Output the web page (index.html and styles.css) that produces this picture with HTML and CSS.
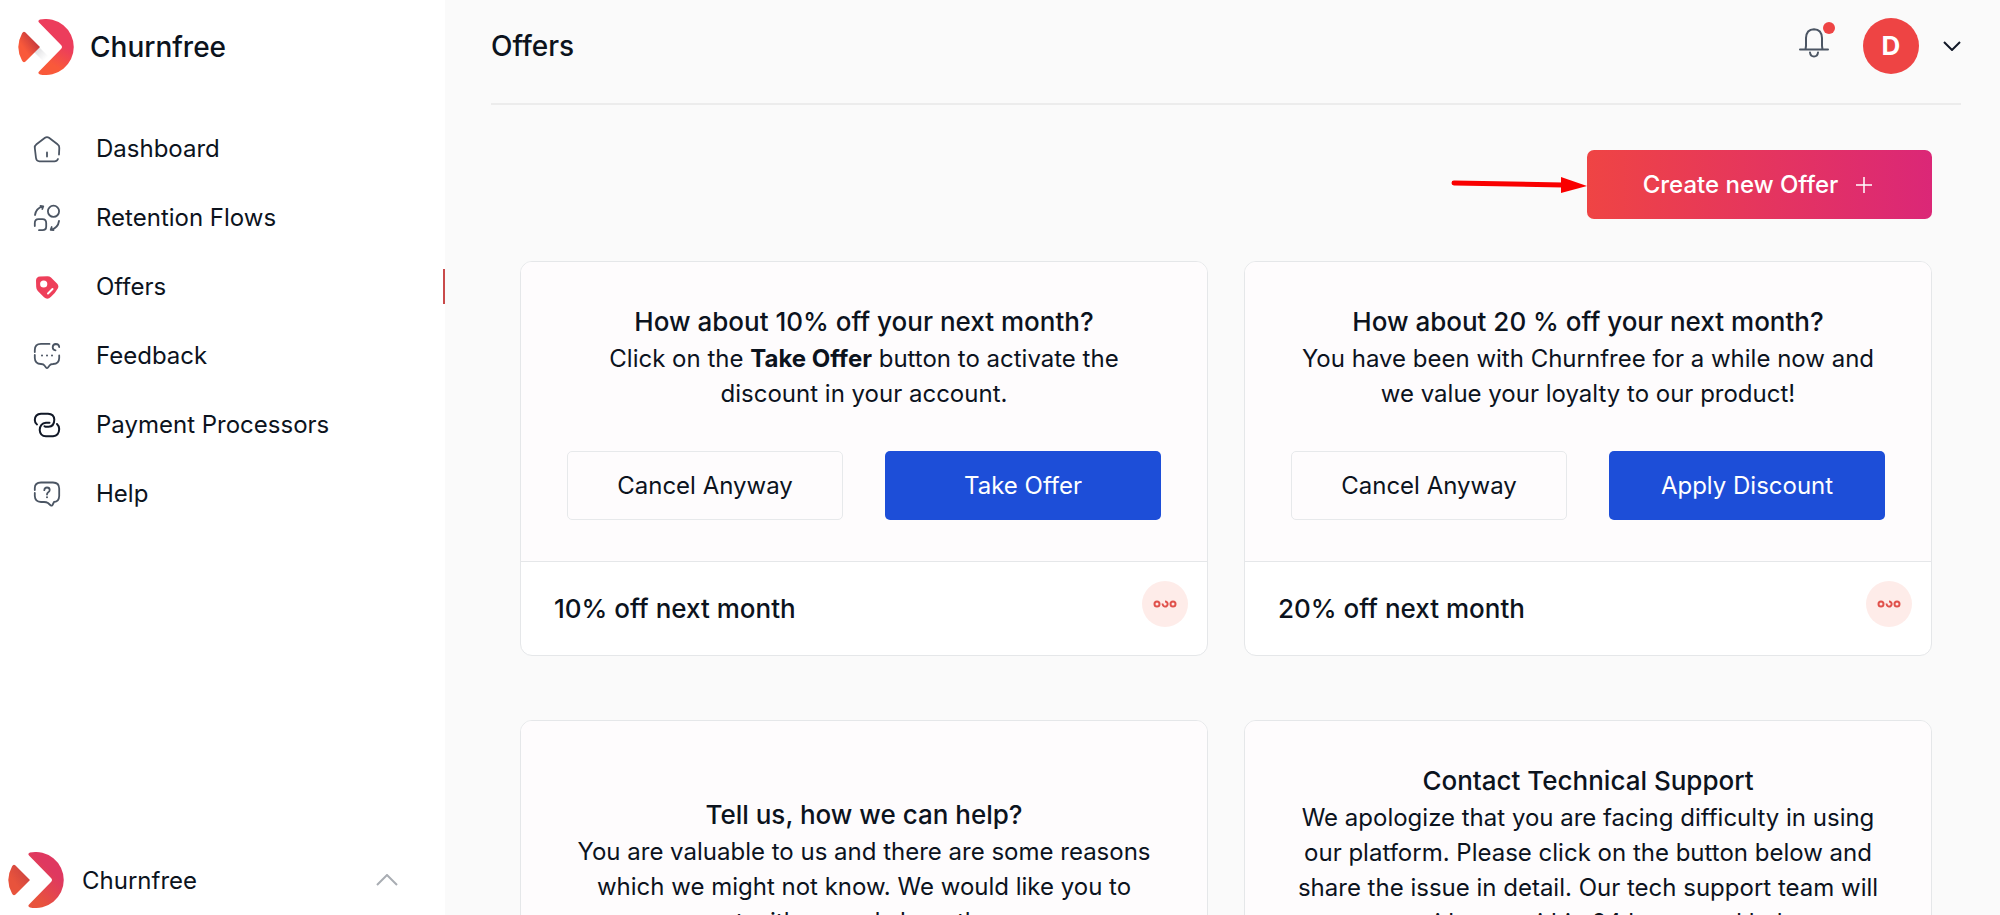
FILE: index.html
```html
<!DOCTYPE html>
<html lang="en">
<head>
<meta charset="utf-8">
<meta name="viewport" content="width=device-width, initial-scale=1">
<title>Offers - Churnfree</title>
<link rel="stylesheet" href="styles.css">
</head>
<body>
<div class="app">
  <aside class="sidebar">
    <a class="brand" href="#">
      <svg class="logo" viewBox="0 0 56 56" aria-hidden="true">
        <defs>
          <linearGradient id="lg1" x1="0.7" y1="0.2" x2="0.4" y2="1"><stop offset="0.3" stop-color="#ec3d5c"/><stop offset="0.8" stop-color="#f9593a"/></linearGradient>
          <linearGradient id="lg2" x1="0.8" y1="0.3" x2="0.4" y2="0.7"><stop offset="0" stop-color="#c73a3e"/><stop offset="1" stop-color="#f9593a"/></linearGradient>
          <linearGradient id="lg3" x1="0" y1="0.2" x2="0.6" y2="0.8"><stop offset="0" stop-color="#cfcfd3"/><stop offset="1" stop-color="#ffffff"/></linearGradient>
        </defs>
        <path d="M21 28 33 40 28 45 16 33Z" fill="url(#lg3)" opacity="0.7"/>
        <path d="M22 .6A28 28 0 1 1 22 55.4Q19 54 21.500 52L43 30Q45 28 43 26L21.500 4Q19 2 22 .6Z" fill="url(#lg1)"/>
        <path d="M7.500 13.500 22 28 7.500 42.500Q5.500 44.500 4 41.500A28 28 0 0 1 4 14.500Q5.500 11.500 7.500 13.500Z" fill="url(#lg2)"/>
      </svg>
      <span>Churnfree</span>
    </a>
    <nav class="nav">
      <a class="nav-item" href="#">
        <svg class="icon" viewBox="0 0 26 26"><path d="M25 18.500 25.300 12Q25.500 9.500 23.500 8.200L15 1.800Q13 .3 11 1.800L2.500 8.200Q.5 9.700 .8 12L2 22Q2.400 25.300 5.500 25.300H20.500Q23 25.300 24 23M13 16.500V20.500"/></svg>
        <span>Dashboard</span>
      </a>
      <a class="nav-item" href="#">
        <svg class="icon" viewBox="0 0 26 26"><circle cx="19.500" cy="6.300" r="5.600"/><path d="M1 10Q2 3 9 1.300M6.500.9 9.300 1.300 8.300 4M25 16Q24 23 17 24.800M19.500 25.200 16.700 24.800 17.700 22M.8 21V18Q.8 14.200 4.500 14.200H8.500Q12.200 14.200 12.200 18V21.500Q12.200 25.200 8.500 25.200H5"/></svg>
        <span>Retention Flows</span>
      </a>
      <a class="nav-item active" href="#" aria-current="page">
        <svg class="icon" viewBox="0 0 26 26"><path class="tag" d="M6 2.500 13.500 2.300Q15.500 2.300 17 3.600L23 9.500Q25.300 12 23.800 14.500 21 19.500 17 22.800 13.500 26.300 10 23.300L3.800 17Q2.300 15.500 2.200 13L2 6.500Q2.200 2.800 6 2.500Z"/><circle class="hole" cx="9.700" cy="10" r="3.600"/><path class="slit" d="M14 19.500 18.500 15"/></svg>
        <span>Offers</span>
      </a>
      <a class="nav-item" href="#">
        <svg class="icon" viewBox="0 0 26 26"><path d="M.8 9V7Q.8 1 7 .9H15.500M.8 12V15Q1 21 7 21 9.500 21 10.500 22.500L12 24.500Q13 25.800 14 24.500L15.500 22.500Q16.500 21 19 21 25.200 20.800 25.200 15V12.500M25.200 4Q25 1 21.800 1 18.700 1.200 18.700 4.300 18.700 7 21.500 7.300"/><path class="dots" d="M8 12.500h.01M13 12.500h.01M18 12.500h.01"/></svg>
        <span>Feedback</span>
      </a>
      <a class="nav-item" href="#">
        <svg class="icon link" viewBox="0 0 26 26"><path d="M3 12.500Q.8 11 .8 8 1 2 7 1.700H14Q20 2 20.300 7.500 20.300 14.500 14.500 14.800 11.500 15 10.500 14.200M23 12Q25.200 14 25.200 17 25 23.800 19 24.300H12Q6 24 5.700 18 6 11.500 12 10.800H15.500"/></svg>
        <span>Payment Processors</span>
      </a>
      <a class="nav-item" href="#">
        <svg class="icon" viewBox="0 0 26 26"><path d="M.8 9V7Q.8 1.600 7 1.500H19Q25.200 1.700 25.200 7.500V15Q25 20.800 20 21L18.500 24Q18 25.300 16.500 24.200L14 22Q12.500 21 10 21H7Q1 20.800 .8 15V12M10.300 9.200Q10.500 6.500 13 6.500 15.700 6.500 15.700 9 15.700 10.500 14 11.500 13 12.200 13 13.500"/><path class="dots" d="M13 16.300h.01"/></svg>
        <span>Help</span>
      </a>
    </nav>
    <button class="workspace" type="button">
      <svg class="logo" viewBox="0 0 56 56" aria-hidden="true">
        <defs>
          <linearGradient id="lg4" x1="0.8" y1="0.2" x2="0.3" y2="1"><stop offset="0.2" stop-color="#df3860"/><stop offset="0.9" stop-color="#e8533c"/></linearGradient>
          <linearGradient id="lg5" x1="0.8" y1="0.3" x2="0.4" y2="0.7"><stop offset="0" stop-color="#d14640"/><stop offset="1" stop-color="#e8533c"/></linearGradient>
        </defs>
        <path d="M22 .6A28 28 0 1 1 22 55.4Q19 54 21.500 52L43 30Q45 28 43 26L21.500 4Q19 2 22 .6Z" fill="url(#lg4)"/>
        <path d="M7.500 13.500 22 28 7.500 42.500Q5.500 44.500 4 41.500A28 28 0 0 1 4 14.500Q5.500 11.500 7.500 13.500Z" fill="url(#lg5)"/>
      </svg>
      <span>Churnfree</span>
      <svg class="chevron-up" viewBox="0 0 22 12"><path d="M1 11 11 1 21 11"/></svg>
    </button>
  </aside>

  <main class="main">
    <header class="topbar">
      <h1 class="page-title">Offers</h1>
      <button class="bell" type="button" aria-label="Notifications">
        <svg viewBox="0 0 30 30"><path d="M1 21.500H29M6.500 21.500 7 18V10Q7.300 1.500 15 1.200 22.700 1.500 23 10V18L23.500 21.500M11 24.500Q11.500 28.500 15 28.500T19 24.500"/></svg>
        <span class="badge"></span>
      </button>
      <button class="account" type="button" aria-label="Account menu">
        <span class="avatar">D</span>
        <svg class="chevron-down" viewBox="0 0 18 10"><path d="M1 1 9 9 17 1"/></svg>
      </button>
    </header>

    <section class="content">
      <div class="actions">
        <svg class="pointer" viewBox="0 0 136 18" aria-hidden="true"><path class="shaft" d="M3 7 112 9"/><path class="head" d="M110 1 136 10 110 17Z"/></svg>
        <button class="create" type="button">
          <span>Create new Offer</span>
          <svg class="plus" viewBox="0 0 16 16"><path d="M0 8H16M8 0V16"/></svg>
        </button>
      </div>

      <div class="cards">
        <article class="card">
          <div class="preview">
            <div>
              <h2>How about 10% off your next month?</h2>
              <p>Click on the <strong>Take Offer</strong> button to activate the discount in your account.</p>
            </div>
            <div class="choices">
              <button class="btn cancel" type="button">Cancel Anyway</button>
              <button class="btn accept" type="button">Take Offer</button>
            </div>
          </div>
          <footer class="card-foot">
            <h3>10% off next month</h3>
            <button class="more" type="button" aria-label="More options"><svg viewBox="0 0 24 8"><circle cx="4" cy="4" r="2.500"/><path d="M12 1.500A2.500 2.500 0 1 1 9.700 3.500"/><circle cx="20" cy="4" r="2.500"/></svg></button>
          </footer>
        </article>

        <article class="card">
          <div class="preview">
            <div>
              <h2>How about 20 % off your next month?</h2>
              <p>You have been with Churnfree for a while now and we value your loyalty to our product!</p>
            </div>
            <div class="choices">
              <button class="btn cancel" type="button">Cancel Anyway</button>
              <button class="btn accept" type="button">Apply Discount</button>
            </div>
          </div>
          <footer class="card-foot">
            <h3>20% off next month</h3>
            <button class="more" type="button" aria-label="More options"><svg viewBox="0 0 24 8"><circle cx="4" cy="4" r="2.500"/><path d="M12 1.500A2.500 2.500 0 1 1 9.700 3.500"/><circle cx="20" cy="4" r="2.500"/></svg></button>
          </footer>
        </article>

        <article class="card">
          <div class="preview roomy">
            <div>
              <h2>Tell us, how we can help?</h2>
              <p>You are valuable to us and there are some reasons which we might not know. We would like you to<br>get with us and share them.</p>
            </div>
          </div>
        </article>

        <article class="card">
          <div class="preview">
            <div>
              <h2>Contact Technical Support</h2>
              <p>We apologize that you are facing difficulty in using our platform. Please click on the button below and share the issue in detail. Our tech support team will<br>get with you within 24 hours and help.</p>
            </div>
          </div>
        </article>
      </div>
    </section>
  </main>
</div>
</body>
</html>
```
FILE: styles.css
```css
* { box-sizing: border-box; }

body {
  margin: 0;
  font-family: Inter, "Open Sans", "Liberation Sans", sans-serif;
  font-size: 24px;
  color: #0c131d;
  background: #fafafa;
}

h1, h2, h3, p { margin: 0; font-weight: 500; }

button {
  font: inherit;
  color: inherit;
  border: 0;
  padding: 0;
  background: none;
  cursor: pointer;
}

a { color: inherit; text-decoration: none; }

svg { fill: none; display: block; flex: none; }

.app { display: flex; height: 100vh; overflow: hidden; }

.sidebar {
  flex: none;
  width: 445px;
  display: flex;
  flex-direction: column;
  background: #fff;
}

.brand {
  display: flex;
  align-items: center;
  gap: 16px;
  padding: 19px 18px 0;
  font-size: 28px;
  font-weight: 500;
}

.logo { width: 56px; height: 56px; }

.nav { display: flex; flex-direction: column; padding-top: 39px; }

.nav-item {
  display: flex;
  align-items: center;
  gap: 36px;
  height: 69px;
  padding-left: 34px;
}

.nav-item.active {
  background: linear-gradient(#c94a4a, #c94a4a) right center / 2px 35px no-repeat;
}

.icon {
  width: 26px;
  height: 26px;
  overflow: visible;
  stroke: #4b5563;
  stroke-width: 1.8;
  stroke-linecap: round;
  stroke-linejoin: round;
}

.icon.link { stroke: #111827; stroke-width: 2; }
.icon .dots { stroke-width: 2; }
.icon .tag { fill: #ee3f5a; stroke: none; }
.icon .hole { fill: #fff; stroke: none; }
.icon .slit { stroke: #fff; stroke-width: 2; }

.workspace {
  display: flex;
  align-items: center;
  gap: 18px;
  margin-top: auto;
  padding: 0 47px 7px 8px;
}

.chevron-up {
  width: 22px;
  height: 12px;
  margin-left: auto;
  stroke: #a9adb3;
  stroke-width: 2;
}

.main { flex: 1; min-width: 0; padding: 0 39px 0 46px; }

.topbar {
  display: flex;
  align-items: center;
  height: 105px;
  padding-bottom: 12px;
  border-bottom: 2px solid #ececec;
}

.page-title { flex: 1; font-size: 28px; }

.bell { position: relative; width: 30px; height: 30px; margin-bottom: 6px; }

.bell svg {
  width: 30px;
  height: 30px;
  stroke: #4b5563;
  stroke-width: 2;
  stroke-linecap: round;
}

.badge {
  position: absolute;
  top: -6px;
  right: -6px;
  width: 12px;
  height: 12px;
  border-radius: 50%;
  background: #ee4444;
}

.account { display: flex; align-items: center; gap: 24px; margin-left: 34px; }

.avatar {
  display: grid;
  place-items: center;
  width: 56px;
  height: 56px;
  border-radius: 50%;
  background: #ee4444;
  color: #fff;
  font-weight: 700;
  font-size: 26px;
}

.chevron-down { width: 18px; height: 10px; stroke: #111827; stroke-width: 2; }

.content { padding: 45px 29px 0; }

.actions { display: flex; justify-content: flex-end; align-items: center; }

.pointer { width: 136px; height: 18px; }
.pointer .shaft { stroke: #f90000; stroke-width: 5; stroke-linecap: round; }
.pointer .head { fill: #f90000; }

.create {
  display: flex;
  align-items: center;
  justify-content: center;
  gap: 18px;
  width: 345px;
  height: 69px;
  padding-right: 4px;
  border-radius: 7px;
  background: linear-gradient(90deg, #ef4444, #db2777);
  color: #fff;
  font-weight: 500;
}

.plus { width: 16px; height: 16px; stroke: #fff; stroke-width: 1.5; }

.cards {
  display: grid;
  grid-template-columns: 1fr 1fr;
  gap: 64px 36px;
  padding-top: 42px;
}

.card {
  border: 1px solid #e5e7e9;
  border-radius: 12px;
  background: #fff;
  overflow: hidden;
}

.preview { padding: 41px 46px; background: #fefcfd; text-align: center; }
.preview.roomy { padding-top: 75px; }
.preview h2 { font-size: 26px; line-height: 38px; }
.preview p { font-weight: 400; line-height: 35px; }
.preview strong { font-weight: 700; }

.choices {
  display: grid;
  grid-template-columns: 1fr 1fr;
  gap: 42px;
  padding-top: 40px;
}

.btn { height: 69px; border-radius: 5px; }
.btn.cancel { border: 1px solid #e7e9eb; }
.btn.accept { background: #1d4ed8; color: #fff; }

.card-foot {
  display: flex;
  align-items: center;
  justify-content: space-between;
  height: 94px;
  padding: 0 19px 0 33px;
  border-top: 1px solid #e5e7e9;
}

.card-foot h3 { font-size: 26px; }

.more {
  display: grid;
  place-items: center;
  width: 46px;
  height: 46px;
  margin-bottom: 10px;
  border-radius: 50%;
  background: #feece9;
}

.more svg { width: 24px; height: 8px; stroke: #e0524c; stroke-width: 2; }
```
